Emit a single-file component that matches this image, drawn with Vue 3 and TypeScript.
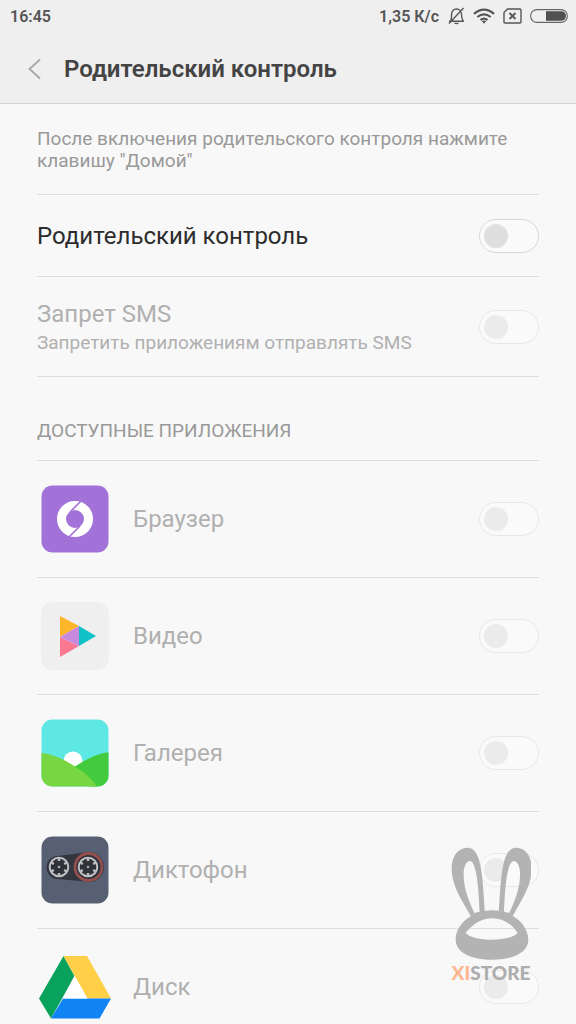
<script setup lang="ts">
import { ref } from 'vue'

interface AppItem {
  id: string
  name: string
  allowed: boolean
}

const parental = ref(false)
const blockSms = ref(false)
const apps = ref<AppItem[]>([
  { id: 'browser', name: 'Браузер', allowed: false },
  { id: 'video', name: 'Видео', allowed: false },
  { id: 'gallery', name: 'Галерея', allowed: false },
  { id: 'recorder', name: 'Диктофон', allowed: false },
  { id: 'drive', name: 'Диск', allowed: false },
])
const spokes = [0, 60, 120, 180, 240, 300]
</script>

<template>
  <div class="screen">
    <header class="top">
      <div class="status">
        <span>16:45</span>
        <div class="status-right">
          <span>1,35 К/с</span>
          <svg class="bell" width="18" height="18" viewBox="0 0 18 18" fill="none" stroke="#555" stroke-width="1.4">
            <path d="M2 14.300h15M3.500 13.500C4.800 12 4.500 10 4.500 7.500 4.500 4 6.800 2 9.500 2s5 2 5 5.500c0 3 .2 4.500 1.500 6M7.500 16q2 1.200 4 0M16.500 1 2 16.500" />
          </svg>
          <svg class="wifi" width="22" height="16" viewBox="0 0 22 16" fill="none" stroke="#555" stroke-width="2.200">
            <path d="M1 5.800Q11-2.500 21 5.800M4.300 9q6.700-5.200 13.400 0M7.500 12q3.500-2.600 7 0" />
            <path d="m8.800 13.300 2.200 2.400 2.200-2.400q-2.200-1.400-4.400 0Z" fill="#555" stroke="none" />
          </svg>
          <svg class="sim" width="19" height="16" viewBox="0 0 19 16" fill="none" stroke="#555" stroke-width="1.400">
            <path d="M4.500 1H17q1 0 1 1v12q0 1-1 1H2q-1 0-1-1V4.500Z" />
            <path d="m6.500 5 6 6m0-6-6 6" stroke-width="1.800" />
          </svg>
          <svg width="38" height="14" viewBox="0 0 38 14">
            <rect x=".6" y=".6" width="36.800" height="12.800" rx="6.400" fill="none" stroke="#666" stroke-width="1.100" />
            <path d="M16 2.200h15.200a4.800 4.800 0 0 1 0 9.600H16Z" fill="#505050" />
          </svg>
        </div>
      </div>
      <div class="title-bar">
        <button class="back" type="button" aria-label="Назад">
          <svg width="14" height="22" viewBox="0 0 14 22" fill="none" stroke="#a6a6a6" stroke-width="1.800">
            <path d="M12 1.500 1.500 11 12 20.500" />
          </svg>
        </button>
        <h1>Родительский контроль</h1>
      </div>
    </header>

    <main>
      <p class="intro">После включения родительского контроля нажмите клавишу "Домой"</p>

      <label class="row main-row">
        <span class="label">Родительский контроль</span>
        <input v-model="parental" type="checkbox" class="switch" />
      </label>

      <label class="row sms-row off">
        <span class="texts">
          <span class="label">Запрет SMS</span>
          <span class="hint">Запретить приложениям отправлять SMS</span>
        </span>
        <input v-model="blockSms" type="checkbox" class="switch" disabled />
      </label>

      <h2>ДОСТУПНЫЕ ПРИЛОЖЕНИЯ</h2>

      <label v-for="app in apps" :key="app.id" class="row app-row off">
        <svg v-if="app.id === 'browser'" class="icon" viewBox="0 0 72 72">
          <rect x="2.500" y="2.500" width="67" height="67" rx="11" fill="#a272d9" />
          <circle cx="36" cy="36" r="13.500" fill="none" stroke="#fff" stroke-width="9" />
          <path d="M42 18 31 29M30 54l11-11" stroke="#a272d9" stroke-width="1.600" />
        </svg>
        <svg v-else-if="app.id === 'video'" class="icon" viewBox="0 0 72 72">
          <rect x="2" y="2" width="68" height="68" rx="12" fill="#efefef" />
          <path d="M21 16v21l19-11Z" fill="#fdb52a" />
          <path d="M21 37v20l19-11Z" fill="#fb7890" />
          <path d="M21 37l19-11v20Z" fill="#c88ade" />
          <path d="M40 26v20l17-10Z" fill="#10c2c7" />
        </svg>
        <svg v-else-if="app.id === 'gallery'" class="icon" viewBox="0 0 72 72">
          <defs>
            <clipPath id="gallery-shape"><rect x="2.500" y="2.500" width="67" height="67" rx="11" /></clipPath>
          </defs>
          <g clip-path="url(#gallery-shape)">
            <rect width="72" height="72" fill="#5ee8e3" />
            <circle cx="34" cy="44" r="9.500" fill="#fff" />
            <path d="M72 35C58 36 48 42 35 50l18 22h19Z" fill="#44cb3d" />
            <path d="M2 36C14 37 26 43 36 49.500 46 56 54 62 59 72H2Z" fill="#77d642" />
          </g>
        </svg>
        <svg v-else-if="app.id === 'recorder'" class="icon" viewBox="0 0 72 72">
          <rect x="2.500" y="2.500" width="67" height="67" rx="11" fill="#566072" />
          <path d="M19 22 49 18a15 15 0 0 1 2 30L19 45a11.500 11.500 0 0 1 0-23Z" fill="#34363f" />
          <circle cx="49.500" cy="33" r="13.500" fill="#30313a" stroke="#94504f" stroke-width="2.800" />
          <g v-for="cx in [20, 49]" :key="cx">
            <circle :cx="cx" cy="33" r="9.300" fill="#303238" stroke="#bfc1c4" stroke-width="2" />
            <path
              v-for="angle in spokes"
              :key="angle"
              :d="`M${cx} 24.500v2.500`"
              :transform="`rotate(${angle} ${cx} 33)`"
              stroke="#bfc1c4"
              stroke-width="2.400"
            />
            <circle :cx="cx" cy="33" r="1.300" fill="#a9acb0" />
          </g>
        </svg>
        <svg v-else class="icon" viewBox="0 0 72 72">
          <path d="M24.500 5 0 47.500l12 20L35.500 25Z" fill="#08a25c" />
          <path d="M24.500 5h23.500L72 47.500H48.500Z" fill="#fecf47" />
          <path d="M12 67.500 24 47.500h48l-11.500 20Z" fill="#1184f5" />
          <path d="M35.500 25 24 47.500h24.500Z" fill="#fff" />
        </svg>
        <span class="label">{{ app.name }}</span>
        <input v-model="app.allowed" type="checkbox" class="switch" disabled />
      </label>
    </main>

    <div class="watermark">
      <svg width="80" height="114" viewBox="48 50 240 342" fill="#b0b0b0" fill-rule="evenodd">
        <path d="M108 258C78 205 50 165 50 115 50 75 70 52 98 52 144 52 143 160 150 250ZM118 248C94 195 85 165 86 125 87 108 95 92 104 92 126 92 131 180 134 244Z" />
        <path d="M233 258C262 205 290 165 290 115 290 75 270 52 243 52 197 52 198 160 191 250ZM223 248C247 195 256 165 255 125 254 108 246 92 237 92 215 92 210 180 207 244Z" />
        <path d="M171 240C230 240 280 282 280 328 280 368 230 388 171 388S62 368 62 328C62 282 112 240 171 240ZM92 308C115 280 140 264 171 264S230 280 248 308C225 335 115 335 92 308Z" />
      </svg>
      <span class="brand"><span class="brand-x">XI</span>STORE</span>
    </div>
  </div>
</template>

<style>
html,
body {
  margin: 0;
  background: #f8f8f8;
}
</style>

<style scoped>
.screen {
  position: relative;
  box-sizing: border-box;
  height: 100vh;
  overflow: hidden;
  background: #f8f8f8;
  font-family: Roboto, "Noto Sans", sans-serif;
  color: #2c2c2c;
}

.top {
  background: #efefef;
  border-bottom: 1px solid #d4d4d4;
}

.status {
  display: flex;
  justify-content: space-between;
  align-items: center;
  height: 32px;
  padding: 0 8px 0 10px;
  font-size: 16px;
  font-weight: 600;
  color: #555;
}

.status-right {
  display: flex;
  align-items: center;
  gap: 8px;
}

.title-bar {
  display: flex;
  align-items: center;
  box-sizing: border-box;
  height: 71px;
  padding: 2px 28px 0;
  gap: 22px;
}

.back {
  display: flex;
  padding: 0;
  border: 0;
  background: none;
}

h1 {
  margin: 0;
  font-size: 24px;
  line-height: 32px;
  font-weight: 600;
  color: #444;
}

main {
  padding: 0 37px;
}

.intro {
  margin: 0;
  padding: 24px 0 22px;
  font-size: 19px;
  line-height: 22px;
  color: #999;
  border-bottom: 1px solid #dedede;
}

.row {
  display: flex;
  align-items: center;
  box-sizing: border-box;
  border-bottom: 1px solid #dedede;
}

.main-row {
  height: 82px;
}

.sms-row {
  height: 100px;
}

.app-row {
  height: 117px;
}

.texts {
  display: flex;
  flex: 1;
  flex-direction: column;
}

.label {
  flex: 1;
  font-size: 24px;
  line-height: 32px;
}

.hint {
  font-size: 19px;
  line-height: 26px;
}

.off {
  color: #b0b0b0;
}

h2 {
  margin: 0;
  padding: 42px 0 17px;
  font-size: 19px;
  line-height: 24px;
  font-weight: 400;
  color: #999;
  border-bottom: 1px solid #dedede;
}

.icon {
  width: 72px;
  height: 72px;
  margin: 0 22px 0 2px;
}

.switch {
  appearance: none;
  display: flex;
  align-items: center;
  box-sizing: border-box;
  width: 60px;
  height: 34px;
  margin: 0;
  padding: 0 4px;
  border: 1px solid #d8d8d8;
  border-radius: 17px;
  background: #fafafa;
}

.switch::before {
  content: "";
  width: 24px;
  height: 24px;
  border-radius: 50%;
  background: #dfdfdf;
}

.switch:checked {
  justify-content: flex-end;
}

.off .switch {
  border-color: #e8e8e8;
}

.off .switch::before {
  background: #ebebeb;
}

.watermark {
  position: absolute;
  right: 45px;
  bottom: 39px;
  display: flex;
  flex-direction: column;
  align-items: center;
  opacity: 0.95;
  pointer-events: none;
}

.brand {
  font-family: Lato, sans-serif;
  font-size: 19px;
  line-height: 24px;
  font-weight: 900;
  color: #aaa;
}

.brand-x {
  color: #ffb48a;
}
</style>
